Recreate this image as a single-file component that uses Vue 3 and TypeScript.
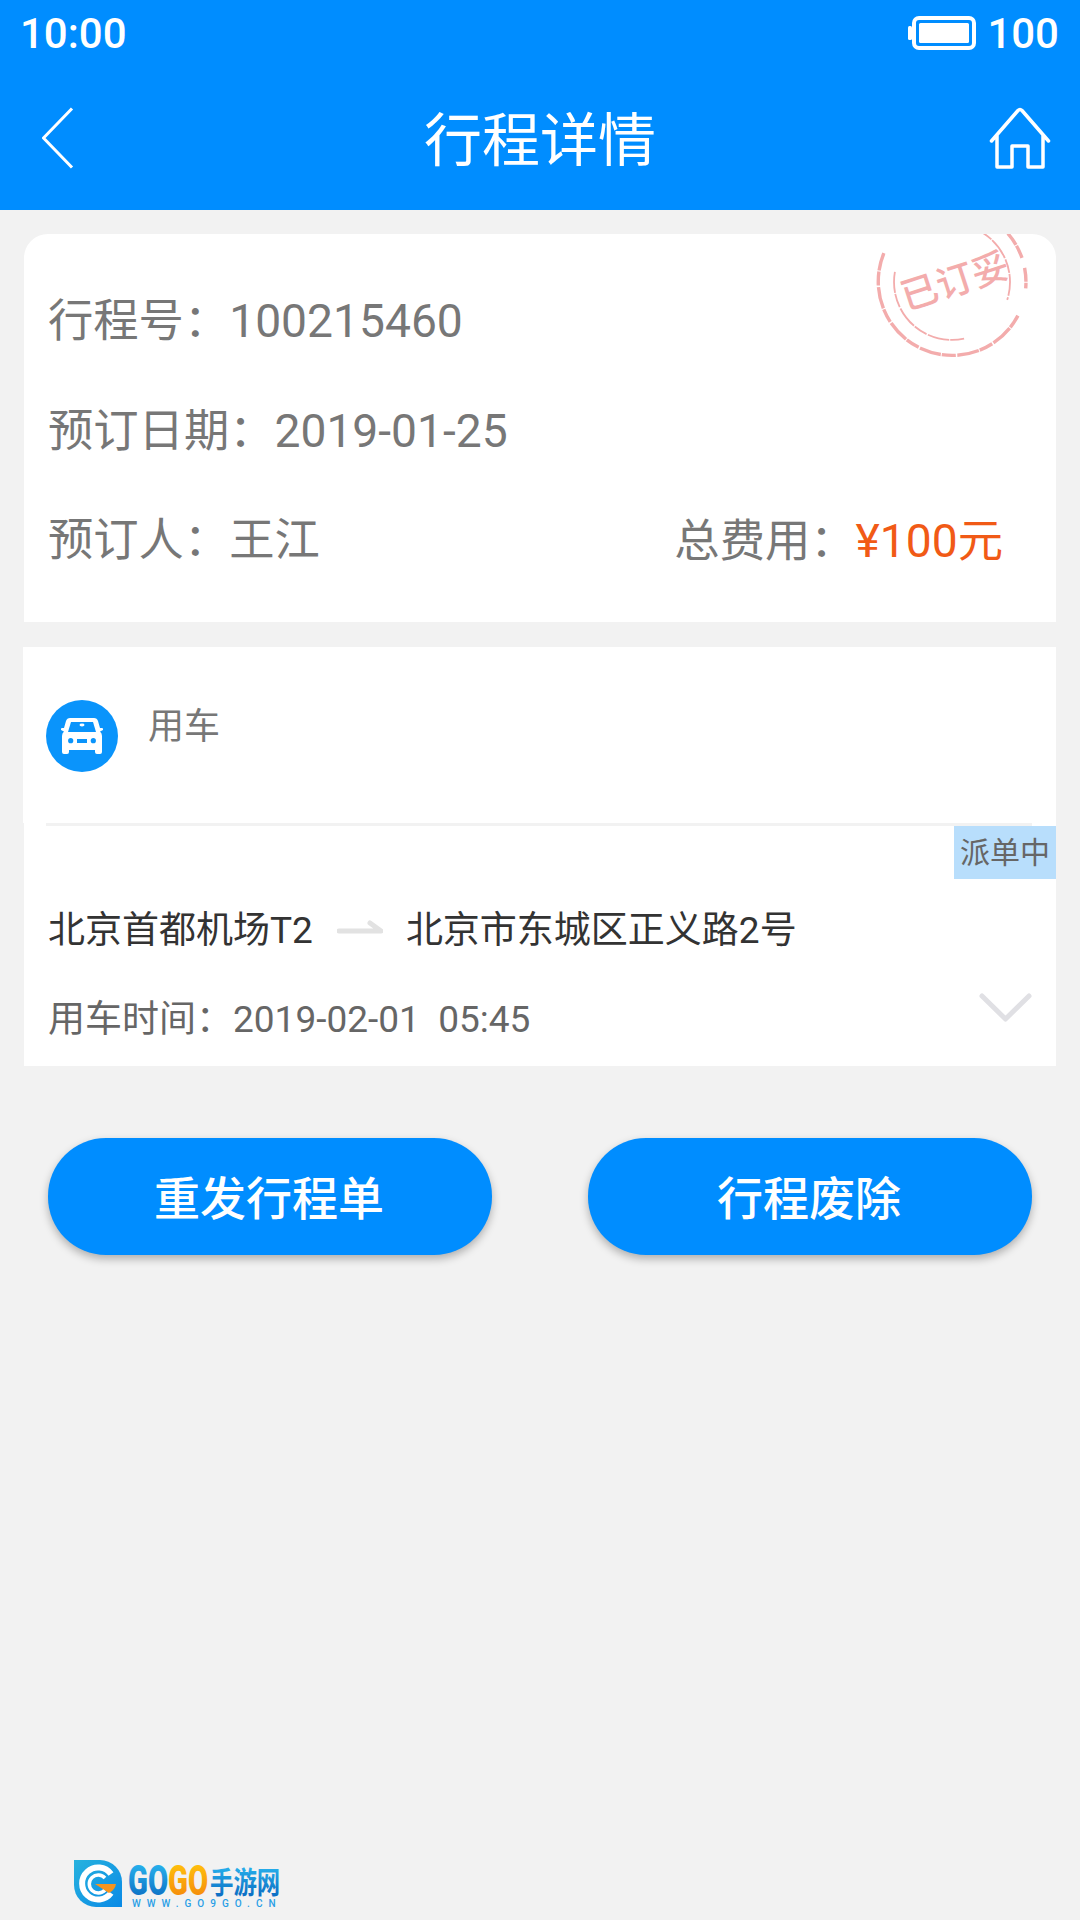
<script setup lang="ts">
type Arc = { r: number; from: number; to: number; width: number }

const stampArcs: Arc[] = [
  { r: 74, from: 27, to: 203, width: 3.4 },
  { r: 74, from: 226, to: 238, width: 2.5 },
  { r: 74, from: 319, to: 341, width: 3.4 },
  { r: 74, from: 349, to: 365, width: 3.4 },
  { r: 58, from: 78, to: 190, width: 1.8 },
  { r: 58, from: 299, to: 378, width: 1.8 },
]

function arcPath(arc: Arc): string {
  const rad = Math.PI / 180
  const x1 = 80 + arc.r * Math.cos(arc.from * rad)
  const y1 = 80 + arc.r * Math.sin(arc.from * rad)
  const x2 = 80 + arc.r * Math.cos(arc.to * rad)
  const y2 = 80 + arc.r * Math.sin(arc.to * rad)
  const large = arc.to - arc.from > 180 ? 1 : 0
  return `M${x1.toFixed(1)} ${y1.toFixed(1)}A${arc.r} ${arc.r} 0 ${large} 1 ${x2.toFixed(1)} ${y2.toFixed(1)}`
}
</script>

<template>
  <div class="page">
    <header class="header">
      <div class="status-bar">
        <span>10:00</span>
        <div class="status-right">
          <svg class="battery" width="68" height="34" viewBox="0 0 68 34">
            <rect x="0" y="10" width="4" height="14" rx="1.5" fill="#fff" />
            <rect x="6" y="2" width="60" height="30" rx="5" fill="none" stroke="#fff" stroke-width="4" />
            <rect x="11" y="7" width="50" height="20" rx="1.5" fill="#fff" />
          </svg>
          <span>100</span>
        </div>
      </div>
      <div class="nav">
        <svg width="32" height="62" viewBox="0 0 32 62" fill="none">
          <path d="M30 1.5 1.5 31 30 60.5" stroke="#fff" stroke-width="3" stroke-linejoin="round" />
        </svg>
        <h1 class="title">行程详情</h1>
        <svg class="home" width="62" height="62" viewBox="0 0 62 62" fill="none">
          <path
            d="M2.5 34 29 3.5Q31 1.5 33 3.5L59.5 34M8 28V60H23V39H39V60H54V28"
            stroke="#fff"
            stroke-width="3.5"
            stroke-linecap="round"
            stroke-linejoin="round"
          />
        </svg>
      </div>
    </header>

    <section class="card summary">
      <svg class="stamp" width="160" height="160" viewBox="0 0 160 160" fill="none">
        <path
          v-for="arc in stampArcs"
          :key="`${arc.r}-${arc.from}`"
          :d="arcPath(arc)"
          stroke="#f3acac"
          :stroke-width="arc.width"
          stroke-dasharray="14 1 22 1.5"
        />
        <text
          x="83"
          y="93"
          text-anchor="middle"
          font-size="37"
          fill="#f3acac"
          transform="rotate(-18 80 80)"
          class="stamp-text"
        >已订妥</text>
      </svg>
      <div class="row">行程号：<span class="num">100215460</span></div>
      <div class="row">预订日期：<span class="num">2019-01-25</span></div>
      <div class="row row-split">
        <span>预订人：王江</span>
        <span>总费用：<em class="price"><span class="num">¥100</span>元</em></span>
      </div>
    </section>

    <section class="trip">
      <div class="trip-head">
        <div class="car-wrap">
          <svg width="72" height="72" viewBox="0 0 72 72">
            <circle cx="36" cy="36" r="36" fill="#0a94fb" />
            <path
              fill="#fff"
              d="M24 18H48Q51 18 52 21L54 28H56Q57.5 28 57 30L54 31.5Q56 33 56 36V52Q56 54 54 54H51Q49 54 49 52V50H23V52Q23 54 21 54H18Q16 54 16 52V36Q16 33 18 31.5L15 30Q14.5 28 16 28H18L20 21Q21 18 24 18Z"
            />
            <path fill="#0a94fb" d="M25 22H47L50 32H22Z" />
            <ellipse cx="36" cy="25" rx="2.5" ry="1.4" fill="#fff" />
            <circle cx="24.7" cy="40.7" r="2.6" fill="#0a94fb" />
            <circle cx="47.3" cy="40.7" r="2.6" fill="#0a94fb" />
            <rect x="31" y="39" width="10" height="4" fill="#0a94fb" />
          </svg>
        </div>
        <span class="trip-type">用车</span>
      </div>
      <div class="trip-line"></div>
      <div class="trip-body">
        <span class="badge">派单中</span>
        <div class="route">
          <span>北京首都机场T2</span>
          <svg class="route-arrow" width="46" height="14" viewBox="0 0 46 14" fill="none">
            <path d="M2 11H44L33 3" stroke="#e2e2e2" stroke-width="5" stroke-linecap="round" stroke-linejoin="round" />
          </svg>
          <span>北京市东城区正义路2号</span>
        </div>
        <div class="time">用车时间：2019-02-01&nbsp;&nbsp;05:45</div>
        <svg class="chevron" width="53" height="29" viewBox="0 0 53 29" fill="none">
          <path d="M3 3 26.5 26 50 3" stroke="#e0e0e4" stroke-width="5" stroke-linecap="round" stroke-linejoin="round" />
        </svg>
      </div>
    </section>

    <div class="actions">
      <button class="btn" type="button">重发行程单</button>
      <button class="btn" type="button">行程废除</button>
    </div>

    <footer class="footer">
      <svg width="212" height="64" viewBox="0 -14 212 64">
        <defs>
          <linearGradient id="tile" x1="0" y1="0" x2="1" y2="1">
            <stop offset="0" stop-color="#27b2de" />
            <stop offset="1" stop-color="#0a8ae6" />
          </linearGradient>
          <linearGradient id="blue" x1="0" y1="0" x2="0" y2="1">
            <stop offset="0.15" stop-color="#29b4ee" />
            <stop offset="0.85" stop-color="#0c6fc4" />
          </linearGradient>
          <linearGradient id="orange" x1="0" y1="0" x2="0" y2="1">
            <stop offset="0.15" stop-color="#ffc20e" />
            <stop offset="0.85" stop-color="#f58a0a" />
          </linearGradient>
        </defs>
        <path d="M0 0H26A22 22 0 0 1 48 22V47H22A22 22 0 0 1 0 25Z" fill="url(#tile)" />
        <path d="M37 14A16 16 0 1 0 37 33" fill="none" stroke="#fff" stroke-width="6" />
        <path d="M31 18A9 9 0 1 0 31 30" fill="none" stroke="#fff" stroke-width="3.5" />
        <path d="M21 24H42Q41 30 35 33Z" fill="#f7941d" />
        <text transform="translate(54 35) scale(0.68 1)" font-size="43" class="logo-text">
          <tspan fill="url(#blue)">GO</tspan><tspan fill="url(#orange)">GO</tspan>
        </text>
        <text transform="translate(136 33) scale(0.78 1)" font-size="30" class="logo-cjk" fill="url(#blue)">手游网</text>
        <text x="58" y="47" font-size="10" class="logo-url" fill="#2a9fe6" letter-spacing="6">WWW.GO9GO.CN</text>
      </svg>
    </footer>
  </div>
</template>

<style>
body {
  background: #f2f2f2;
}
</style>

<style scoped>
.page {
  width: 1080px;
  min-height: 1920px;
  display: flex;
  flex-direction: column;
  background: #f2f2f2;
  font-family: Roboto, "Noto Sans CJK SC", sans-serif;
  color: #777;
}
.header {
  height: 210px;
  background: #008dff;
  color: #fff;
}
.status-bar {
  height: 66px;
  padding: 0 21px 0 20px;
  display: flex;
  justify-content: space-between;
  align-items: center;
  font-size: 42px;
  font-weight: 500;
}
.status-right {
  display: flex;
  align-items: center;
  gap: 11px;
}
.battery {
  display: block;
}
.nav {
  height: 144px;
  padding: 0 29px 0 42px;
  display: grid;
  grid-template-columns: 1fr auto 1fr;
  align-items: center;
}
.home {
  justify-self: end;
}
.title {
  margin: 6px 13px 0 0;
  font-size: 58px;
  font-weight: 400;
  line-height: 1;
}
.card {
  position: relative;
  overflow: hidden;
  margin: 24px 24px 0;
  background: #fff;
}
.summary {
  height: 388px;
  padding: 32px 53px 0 24px;
  box-sizing: border-box;
  border-radius: 24px 24px 0 0;
}
.stamp {
  position: absolute;
  top: -32px;
  right: 24px;
}
.stamp-text {
  font-family: "Noto Sans CJK SC", sans-serif;
  font-weight: 500;
}
.row {
  height: 110px;
  line-height: 110px;
  font-size: 45.3px;
}
.num {
  font-size: 46.2px;
}
.row-split {
  display: flex;
  justify-content: space-between;
}
.price {
  font-style: normal;
  color: #f15a16;
}
.trip {
  margin: 25px 24px 0;
}
.trip-head {
  height: 176px;
  margin-left: -1px;
  padding: 53px 0 0 23px;
  box-sizing: border-box;
  display: flex;
  background: #fff;
}
.car-wrap {
  height: 72px;
}
.car-wrap svg {
  display: block;
}
.trip-type {
  margin-left: 30px;
  font-size: 36px;
  line-height: 54px;
}
.trip-line {
  height: 3px;
  background: linear-gradient(#f2f2f2, #f2f2f2) 22px 0 / 986px 3px no-repeat #fff;
}
.trip-body {
  position: relative;
  height: 240px;
  padding: 71px 0 0 24px;
  box-sizing: border-box;
  background: #fff;
}
.badge {
  position: absolute;
  top: 0;
  right: 0;
  width: 102px;
  height: 53px;
  line-height: 53px;
  text-align: center;
  font-size: 30px;
  color: #666;
  background: #b8defc;
}
.route {
  display: flex;
  align-items: center;
  height: 60px;
  font-size: 37px;
  color: #333;
}
.route-arrow {
  margin: 0 23px 0 24px;
}
.time {
  margin-top: 33px;
  height: 60px;
  line-height: 60px;
  font-size: 37px;
  color: #666;
}
.chevron {
  position: absolute;
  top: 167px;
  right: 24px;
}
.actions {
  margin-top: 72px;
  padding: 0 48px;
  display: flex;
  justify-content: space-between;
}
.btn {
  width: 444px;
  height: 117px;
  border: 0;
  border-radius: 58px;
  background: #008dff;
  box-shadow: 0 4px 8px rgba(0, 0, 0, 0.28);
  color: #fff;
  font-family: inherit;
  font-size: 46px;
  font-weight: 500;
  padding: 0 2px 4px 0;
}
.footer {
  margin-top: auto;
  padding: 0 0 10px 74px;
}
.footer svg {
  display: block;
}
.logo-text {
  font-family: Roboto, sans-serif;
  font-weight: 900;
}
.logo-cjk {
  font-family: "Noto Sans CJK SC", sans-serif;
  font-weight: 700;
}
.logo-url {
  font-family: Roboto, sans-serif;
  font-weight: 500;
}
</style>
